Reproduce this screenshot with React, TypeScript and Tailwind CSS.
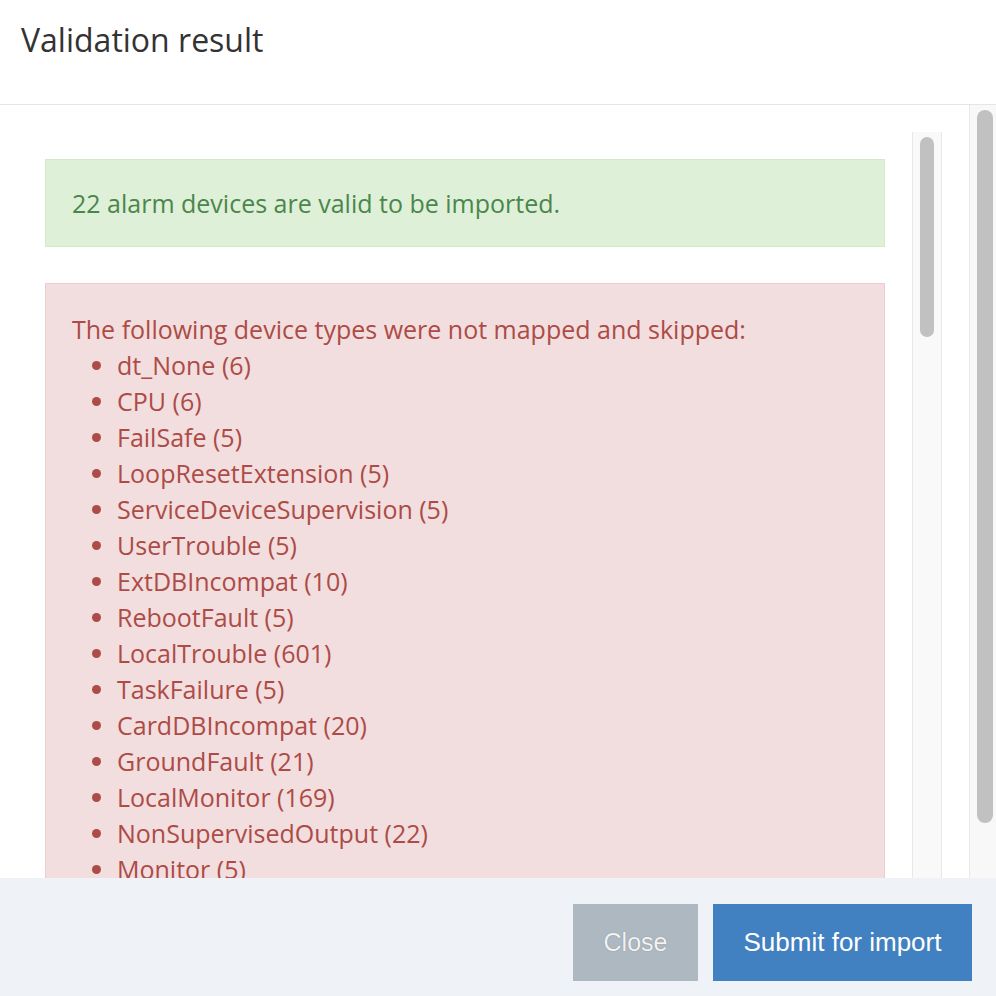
const skipped = [
  "dt_None (6)",
  "CPU (6)",
  "FailSafe (5)",
  "LoopResetExtension (5)",
  "ServiceDeviceSupervision (5)",
  "UserTrouble (5)",
  "ExtDBIncompat (10)",
  "RebootFault (5)",
  "LocalTrouble (601)",
  "TaskFailure (5)",
  "CardDBIncompat (20)",
  "GroundFault (21)",
  "LocalMonitor (169)",
  "NonSupervisedOutput (22)",
  "Monitor (5)",
];

export default function App() {
  return (
    <div className="w-[996px] h-[996px] flex flex-col bg-white overflow-hidden font-['Open_Sans',sans-serif]">
      {/* Header */}
      <div className="h-[105px] shrink-0 border-b border-[#e5e5e5] px-[21px] pt-[18px]">
        <h1 className="text-[32px] leading-[44px] text-[#333]">Validation result</h1>
      </div>

      {/* Body */}
      <div className="flex-1 min-h-0 flex">
        <div className="flex-1 min-w-0 flex pt-[27px] pr-[27px]">
          <div className="flex-1 min-w-0 overflow-hidden pl-[45px] pr-[27px] pt-[27px]">
            <div className="bg-[#dff0d8] border border-[#d6e9c6] text-[#4b864c] px-[26px] py-[25px] text-[25px] leading-[36px]">
              22 alarm devices are valid to be imported.
            </div>
            <div className="mt-[36px] bg-[#f2dede] border border-[#ebccd1] text-[#ad4b47] px-[26px] pt-[27px] pb-[26px] text-[25px] leading-[36px]">
              <p>The following device types were not mapped and skipped:</p>
              <ul className="list-disc pl-[45px]">
                {skipped.map((s) => (
                  <li key={s}>{s}</li>
                ))}
              </ul>
            </div>
          </div>
          {/* inner scrollbar */}
          <div className="w-[30px] shrink-0 bg-[#f9f9f9] border-x border-[#e8e8e8] pt-[5px] px-[7px]">
            <div className="h-[200px] rounded-full bg-[#c1c1c1]"></div>
          </div>
        </div>
        {/* outer scrollbar */}
        <div className="w-[27px] shrink-0 bg-[#f8f8f8] border-l border-[#e8e8e8] pt-[5px] pl-[7px] pr-[3px]">
          <div className="h-[713px] rounded-full bg-[#c1c1c1]"></div>
        </div>
      </div>

      {/* Footer */}
      <div className="h-[118px] shrink-0 bg-[#eff2f6] flex justify-end items-start pt-[26px] pr-[24px] gap-[15px] font-['Liberation_Sans',Arial,sans-serif]">
        <button className="w-[125px] h-[77px] bg-[#adb8c1] text-[#f2f3f4] text-[25px] [text-shadow:0_0_1px_rgba(0,0,0,0.35)]">Close</button>
        <button className="w-[259px] h-[77px] bg-[#4180c1] text-white text-[26px]">Submit for import</button>
      </div>
    </div>
  );
}
